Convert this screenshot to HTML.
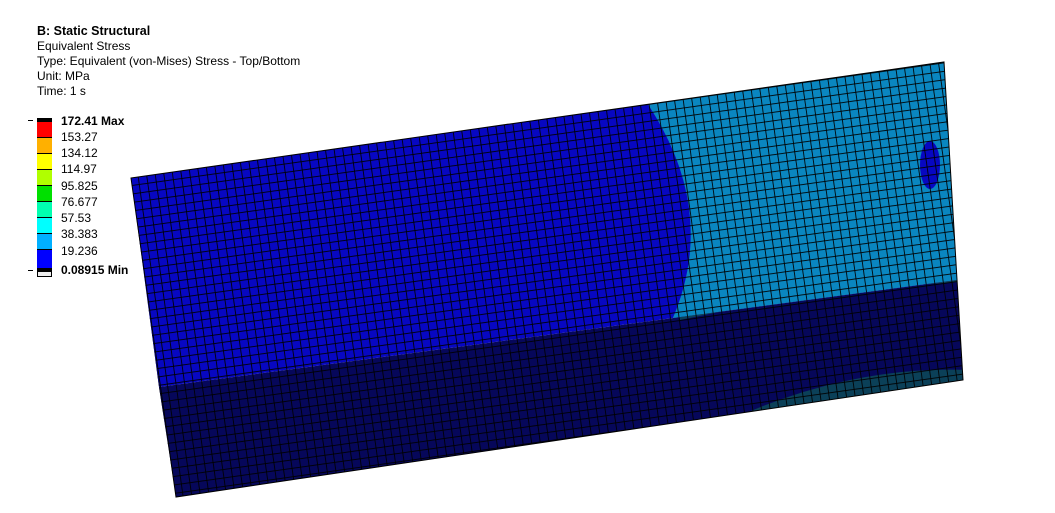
<!DOCTYPE html>
<html><head><meta charset="utf-8"><style>
html,body{margin:0;padding:0;background:#fff;width:1055px;height:513px;overflow:hidden;position:relative;font-family:"Liberation Sans",sans-serif;}
.t{position:absolute;left:37px;font-size:12px;color:#000;line-height:16px;white-space:nowrap;}
.leg{position:absolute;left:37px;top:118px;}
.sw{position:absolute;left:0;width:15px;height:16px;border-top:1px solid #000;box-sizing:border-box;}
.lb{position:absolute;left:24px;font-size:12px;line-height:12px;white-space:nowrap;}
</style></head><body>
<svg width="1055" height="513" style="position:absolute;left:0;top:0">
<defs>
<pattern id="m" width="8.6" height="8.4" patternUnits="userSpaceOnUse" patternTransform="rotate(-8)">
<path d="M0 0H8.6M0 0V8.4" stroke="#000" stroke-width="1.7" fill="none"/>
</pattern>
<clipPath id="top"><polygon points="131,178 944,62 957,280 159,387"/></clipPath>
<clipPath id="bot"><polygon points="159,387 957,280 963,380 176,497"/></clipPath>
</defs>
<g clip-path="url(#top)">
<rect x="0" y="0" width="1055" height="513" fill="#0707c2"/>
<path d="M645,100 Q720,210 672,320 L970,320 L970,40 Z" fill="#0a86c0"/>
<ellipse cx="930" cy="165" rx="10" ry="24" fill="#0707c2"/>
<rect x="0" y="0" width="1055" height="513" fill="url(#m)"/>
</g>
<g clip-path="url(#bot)">
<rect x="0" y="0" width="1055" height="513" fill="#06075a"/>
<path d="M680,320 Q820,290 960,282 L960,270 L680,300Z" fill="#0b4058"/>
<path d="M730,420 Q850,365 970,370 L970,440 L730,440Z" fill="#0b4058"/>
<rect x="0" y="0" width="1055" height="513" fill="url(#m)"/>
</g>
<polygon points="131,178 944,62 963,380 176,497" fill="none" stroke="#000" stroke-width="1"/>
</svg>
<div class="t" style="top:23px;font-weight:bold;font-size:12.5px">B: Static Structural</div>
<div class="t" style="top:38px">Equivalent Stress</div>
<div class="t" style="top:53px">Type: Equivalent (von-Mises) Stress - Top/Bottom</div>
<div class="t" style="top:68px">Unit: MPa</div>
<div class="t" style="top:83px">Time: 1 s</div>
<div class="leg">
<div style="position:absolute;left:-9px;top:2px;width:5px;height:1px;background:#000"></div>
<div style="position:absolute;left:-9px;top:152px;width:5px;height:1px;background:#000"></div>
<div class="sw" style="top:0;height:3px;background:#000"></div>
<div class="sw" style="top:3px;background:#f00"></div>
<div class="sw" style="top:19px;background:#ffb000"></div>
<div class="sw" style="top:35px;background:#ff0"></div>
<div class="sw" style="top:51px;background:#b0ff00"></div>
<div class="sw" style="top:67px;background:#00e000"></div>
<div class="sw" style="top:83px;background:#00ffb0"></div>
<div class="sw" style="top:99px;background:#00ffff"></div>
<div class="sw" style="top:115px;background:#00b0ff"></div>
<div class="sw" style="top:131px;height:19px;background:#0000ff"></div>
<div class="sw" style="top:150px;height:3px;background:#000;border:none"></div>
<div class="sw" style="top:153px;height:6px;background:#eee;border:1px solid #000"></div>
<div class="lb" style="top:-3px;font-weight:bold">172.41 Max</div>
<div class="lb" style="top:13px">153.27</div>
<div class="lb" style="top:29px">134.12</div>
<div class="lb" style="top:45px">114.97</div>
<div class="lb" style="top:62px">95.825</div>
<div class="lb" style="top:78px">76.677</div>
<div class="lb" style="top:94px">57.53</div>
<div class="lb" style="top:110px">38.383</div>
<div class="lb" style="top:127px">19.236</div>
<div class="lb" style="top:146px;font-weight:bold">0.08915 Min</div>
</div>
</body></html>
